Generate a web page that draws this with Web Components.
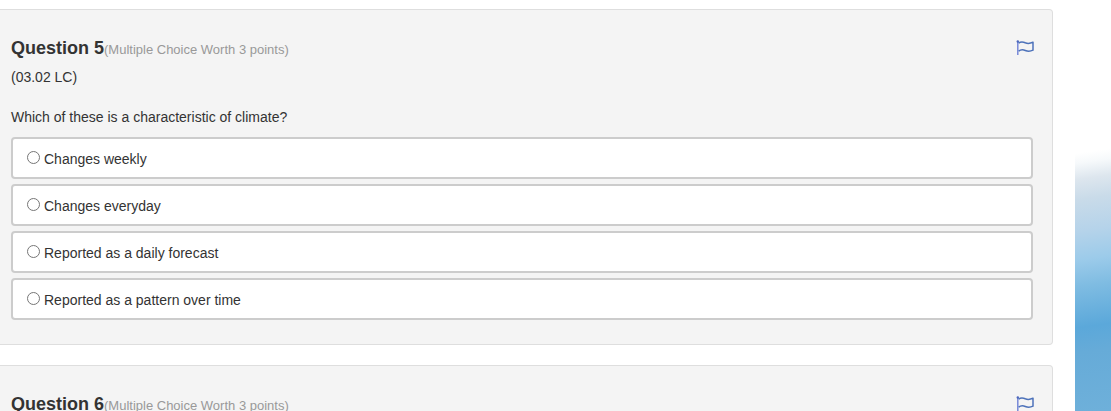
<!DOCTYPE html>
<html lang="en">
<head>
<meta charset="utf-8">
<title>Quiz</title>
<style>
  body { margin: 0; background: #fff; color: #333; font: 14px/20px "Liberation Sans", Arial, sans-serif; }
</style>
</head>
<body>
<quiz-page>
  <quiz-question number="5" name="q5">
    <span slot="worth">(Multiple Choice Worth 3 points)</span>
    <span slot="code">(03.02 LC)</span>
    <span slot="prompt">Which of these is a characteristic of climate?</span>
    <quiz-choice group="q5">Changes weekly</quiz-choice>
    <quiz-choice group="q5">Changes everyday</quiz-choice>
    <quiz-choice group="q5">Reported as a daily forecast</quiz-choice>
    <quiz-choice group="q5">Reported as a pattern over time</quiz-choice>
  </quiz-question>
  <quiz-question number="6" name="q6">
    <span slot="worth">(Multiple Choice Worth 3 points)</span>
  </quiz-question>
</quiz-page>

<template id="page-template">
  <style>
    :host { display: grid; grid-template-columns: minmax(0, 1fr) 36px; column-gap: 22px; height: 100vh; overflow: hidden; }
    main { display: flex; flex-direction: column; gap: 20px; padding-top: 9px; }
    .sky {
      background:
        linear-gradient(172deg, #fff 152px, #f6f9fb 162px, #dde6ee 178px, #c9dbe9 198px, #b5d3ea 230px, #9ccbea 258px, #7fbce2 284px, #5ba8da 325px, #66abd8 350px, #6eb0da 411px);
    }
  </style>
  <main><slot></slot></main>
  <div class="sky"></div>
</template>

<template id="question-template">
  <style>
    :host { display: block; flex: none; }
    section { background: #f4f4f4; border: 1px solid #dedede; border-left: 0; border-radius: 0 4px 4px 0; padding: 29px 19px 24px 11px; }
    header { display: flex; justify-content: space-between; align-items: center; height: 20px; margin-bottom: 8px; }
    .title { display: flex; align-items: baseline; }
    h2 { margin: 0; font-size: 18px; line-height: 20px; }
    .worth { color: #999; font-size: 13px; }
    button { display: flex; margin: 0 -2px 2px 0; padding: 0; border: 0; background: none; cursor: pointer; }
    p { margin: 0 0 20px; min-height: 20px; }
    fieldset { margin: 0; padding: 0; border: 0; min-width: 0; }
    legend { padding: 0 0 10px; min-height: 20px; }
    .choices { display: flex; flex-direction: column; gap: 5px; }
  </style>
  <section>
    <header>
      <div class="title"><h2></h2><span class="worth"><slot name="worth"></slot></span></div>
      <button type="button" aria-label="Flag question">
        <svg width="20" height="16" viewBox="0 0 20 16" fill="none">
          <path d="M2.8 1.5V15" stroke="#7788d8" stroke-width="1.5"/>
          <circle cx="2.8" cy="1.5" r="1.2" fill="#4d67bd"/>
          <path d="M3.6 3.2C6 1.2 8.2 1.8 10.3 2.8C12.8 3.9 15 3.7 18 2.2V10.2C15 11.7 12.8 11.6 10.3 10.5C8.2 9.6 6 9.3 3.6 11.2" stroke="#4d72ba" stroke-width="1.5" stroke-linejoin="round"/>
        </svg>
      </button>
    </header>
    <p><slot name="code"></slot></p>
    <fieldset>
      <legend><slot name="prompt"></slot></legend>
      <div class="choices"><slot></slot></div>
    </fieldset>
  </section>
</template>

<template id="choice-template">
  <style>
    :host { display: block; }
    label { display: flex; align-items: center; gap: 4px; padding: 10px 14px 8px; background: #fff; border: 2px solid #ccc; border-radius: 4px; cursor: pointer; }
    input { appearance: none; box-sizing: border-box; width: 13px; height: 13px; margin: 0 0 4px; border: 1px solid #767676; border-radius: 50%; background: #fff; }
    input:checked { background: radial-gradient(circle, #0075ff 3px, #fff 4px); border-color: #0075ff; }
  </style>
  <label><input type="radio"><span><slot></slot></span></label>
</template>

<script>
  class TemplateElement extends HTMLElement {
    constructor() {
      super();
      const template = document.getElementById(this.constructor.template);
      this.attachShadow({ mode: "open" }).append(template.content.cloneNode(true));
    }
  }

  class QuizPage extends TemplateElement {
    static template = "page-template";
  }

  class QuizQuestion extends TemplateElement {
    static template = "question-template";
    connectedCallback() {
      this.shadowRoot.querySelector("h2").textContent = "Question " + this.getAttribute("number");
    }
  }

  class QuizChoice extends TemplateElement {
    static template = "choice-template";
    connectedCallback() {
      const input = this.shadowRoot.querySelector("input");
      input.name = this.getAttribute("group");
      // Radios in separate shadow roots do not share a group, so siblings are cleared here.
      input.addEventListener("change", () => {
        for (const other of this.parentElement.querySelectorAll("quiz-choice")) {
          if (other !== this) other.shadowRoot.querySelector("input").checked = false;
        }
      });
    }
  }

  customElements.define("quiz-page", QuizPage);
  customElements.define("quiz-question", QuizQuestion);
  customElements.define("quiz-choice", QuizChoice);
</script>
</body>
</html>
